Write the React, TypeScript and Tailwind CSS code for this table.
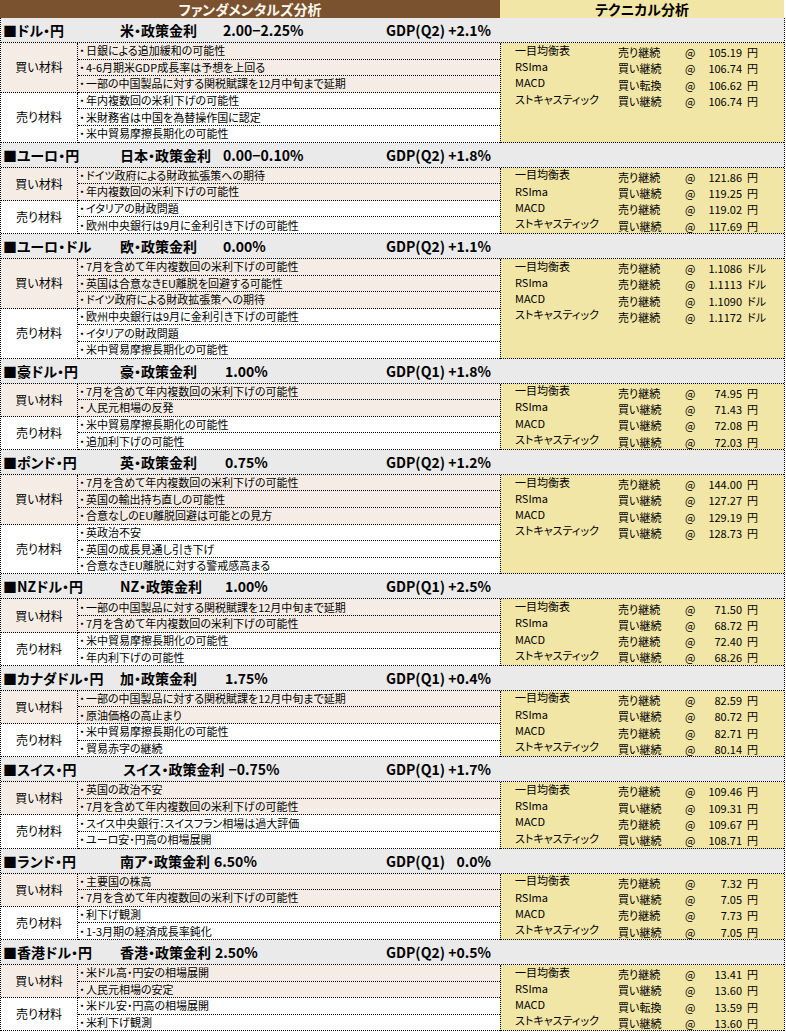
import React from 'react';

type Section = {
  pair: string;
  rateLabel: string;
  rate: string;
  labelCls: string;
  gdp: string;
  gdpValue: string;
  buy: string[];
  sell: string[];
  unit: string;
  tech: [string, string][];
};

const TECH_NAMES = ['一目均衡表', 'RSIma', 'MACD', 'ストキャスティック'];

const sections: Section[] = [
  {
    pair: '■ドル・円', rateLabel: '米・政策金利', rate: '2.00−2.25%', labelCls: 'pl-0 min-w-[99px]',
    gdp: 'GDP(Q2)', gdpValue: '+2.1%',
    buy: ['日銀による追加緩和の可能性', '4-6月期米GDP成長率は予想を上回る', '一部の中国製品に対する関税賦課を12月中旬まで延期'],
    sell: ['年内複数回の米利下げの可能性', '米財務省は中国を為替操作国に認定', '米中貿易摩擦長期化の可能性'],
    unit: '円',
    tech: [['売り継続', '105.19'], ['買い継続', '106.74'], ['買い転換', '106.62'], ['買い継続', '106.74']],
  },
  {
    pair: '■ユーロ・円', rateLabel: '日本・政策金利', rate: '0.00−0.10%', labelCls: 'pl-0 min-w-[99px]',
    gdp: 'GDP(Q2)', gdpValue: '+1.8%',
    buy: ['ドイツ政府による財政拡張策への期待', '年内複数回の米利下げの可能性'],
    sell: ['イタリアの財政問題', '欧州中央銀行は9月に金利引き下げの可能性'],
    unit: '円',
    tech: [['売り継続', '121.86'], ['買い継続', '119.25'], ['売り継続', '119.02'], ['買い継続', '117.69']],
  },
  {
    pair: '■ユーロ・ドル', rateLabel: '欧・政策金利', rate: '0.00%', labelCls: 'pl-0 min-w-[99px]',
    gdp: 'GDP(Q2)', gdpValue: '+1.1%',
    buy: ['7月を含めて年内複数回の米利下げの可能性', '英国は合意なきEU離脱を回避する可能性', 'ドイツ政府による財政拡張策への期待'],
    sell: ['欧州中央銀行は9月に金利引き下げの可能性', 'イタリアの財政問題', '米中貿易摩擦長期化の可能性'],
    unit: 'ドル',
    tech: [['売り継続', '1.1086'], ['売り継続', '1.1113'], ['売り継続', '1.1090'], ['売り継続', '1.1172']],
  },
  {
    pair: '■豪ドル・円', rateLabel: '豪・政策金利', rate: '1.00%', labelCls: 'pl-0 min-w-[101px]',
    gdp: 'GDP(Q1)', gdpValue: '+1.8%',
    buy: ['7月を含めて年内複数回の米利下げの可能性', '人民元相場の反発'],
    sell: ['米中貿易摩擦長期化の可能性', '追加利下げの可能性'],
    unit: '円',
    tech: [['売り継続', '74.95'], ['買い継続', '71.43'], ['買い継続', '72.08'], ['買い継続', '72.03']],
  },
  {
    pair: '■ポンド・円', rateLabel: '英・政策金利', rate: '0.75%', labelCls: 'pl-0 min-w-[101px]',
    gdp: 'GDP(Q2)', gdpValue: '+1.2%',
    buy: ['7月を含めて年内複数回の米利下げの可能性', '英国の輸出持ち直しの可能性', '合意なしのEU離脱回避は可能との見方'],
    sell: ['英政治不安', '英国の成長見通し引き下げ', '合意なきEU離脱に対する警戒感高まる'],
    unit: '円',
    tech: [['売り継続', '144.00'], ['買い継続', '127.27'], ['買い継続', '129.19'], ['買い継続', '128.73']],
  },
  {
    pair: '■NZドル・円', rateLabel: 'NZ・政策金利', rate: '1.00%', labelCls: 'pl-0 min-w-[101px]',
    gdp: 'GDP(Q1)', gdpValue: '+2.5%',
    buy: ['一部の中国製品に対する関税賦課を12月中旬まで延期', '7月を含めて年内複数回の米利下げの可能性'],
    sell: ['米中貿易摩擦長期化の可能性', '年内利下げの可能性'],
    unit: '円',
    tech: [['売り継続', '71.50'], ['買い継続', '68.72'], ['売り継続', '72.40'], ['買い継続', '68.26']],
  },
  {
    pair: '■カナダドル・円', rateLabel: '加・政策金利', rate: '1.75%', labelCls: 'pl-0 min-w-[101px]',
    gdp: 'GDP(Q1)', gdpValue: '+0.4%',
    buy: ['一部の中国製品に対する関税賦課を12月中旬まで延期', '原油価格の高止まり'],
    sell: ['米中貿易摩擦長期化の可能性', '貿易赤字の継続'],
    unit: '円',
    tech: [['売り継続', '82.59'], ['買い継続', '80.72'], ['売り継続', '82.71'], ['買い継続', '80.14']],
  },
  {
    pair: '■スイス・円', rateLabel: 'スイス・政策金利', rate: '−0.75%', labelCls: 'pl-[3px] min-w-[85px]',
    gdp: 'GDP(Q1)', gdpValue: '+1.7%',
    buy: ['英国の政治不安', '7月を含めて年内複数回の米利下げの可能性'],
    sell: ['スイス中央銀行：スイスフラン相場は過大評価', 'ユーロ安・円高の相場展開'],
    unit: '円',
    tech: [['売り継続', '109.46'], ['買い継続', '109.31'], ['売り継続', '109.67'], ['買い継続', '108.71']],
  },
  {
    pair: '■ランド・円', rateLabel: '南ア・政策金利', rate: '6.50%', labelCls: 'pl-0 min-w-[89px]',
    gdp: 'GDP(Q1)', gdpValue: '0.0%',
    buy: ['主要国の株高', '7月を含めて年内複数回の米利下げの可能性'],
    sell: ['利下げ観測', '1-3月期の経済成長率鈍化'],
    unit: '円',
    tech: [['売り継続', '7.32'], ['買い継続', '7.05'], ['売り継続', '7.73'], ['買い継続', '7.05']],
  },
  {
    pair: '■香港ドル・円', rateLabel: '香港・政策金利', rate: '2.50%', labelCls: 'pl-0 min-w-[89px]',
    gdp: 'GDP(Q2)', gdpValue: '+0.5%',
    buy: ['米ドル高・円安の相場展開', '人民元相場の安定'],
    sell: ['米ドル安・円高の相場展開', '米利下げ観測'],
    unit: '円',
    tech: [['売り継続', '13.41'], ['買い継続', '13.60'], ['買い転換', '13.59'], ['買い継続', '13.60']],
  },
];

const ItemRow = ({ text }: { text: string }) => (
  <div className="h-[16.6px] border-b border-dotted border-black flex items-center whitespace-nowrap text-[11px] leading-none">
    <span className="flex w-[8px] justify-center">・</span>
    <span>{text}</span>
  </div>
);

const Group = ({ label, items, buy }: { label: string; items: string[]; buy: boolean }) => (
  <div className={`flex ${buy ? 'bg-[#F5EDE5]' : 'bg-white'}`}>
    <div className="w-[77px] shrink-0 border-r border-b border-dotted border-black flex items-center justify-center text-[12px] leading-none">
      {label}
    </div>
    <div className="flex-1 flex flex-col">
      {items.map((t, i) => (
        <ItemRow key={i} text={t} />
      ))}
    </div>
  </div>
);

const SectionBlock = ({ s }: { s: Section }) => (
  <div>
    <div className="h-[25px] bg-[#EAEAEA] border-b border-dotted border-black flex items-center font-bold text-[14px] leading-none whitespace-nowrap">
      <div className="w-[385px] shrink-0 flex">
        <div className="w-[119px] shrink-0 pl-[2px]">{s.pair}</div>
        <div className={`${s.labelCls} mr-[4px]`}>{s.rateLabel}</div>
        <div>{s.rate}</div>
      </div>
      <div className="w-[58px] shrink-0">{s.gdp}</div>
      <div className="w-[47px] shrink-0 text-right">{s.gdpValue}</div>
    </div>
    <div className="flex">
      <div className="w-[499px] shrink-0 flex flex-col">
        <Group label="買い材料" items={s.buy} buy />
        <Group label="売り材料" items={s.sell} buy={false} />
      </div>
      <div className="flex-1 bg-[#F2E6A6] border-l border-b border-dotted border-black pl-[14px] text-[11px] leading-none">
        {s.tech.map(([signal, price], i) => (
          <div key={i} className="h-[16.3px] flex items-center whitespace-nowrap">
            <div className="w-[103px] shrink-0 pb-[2px]">{TECH_NAMES[i]}</div>
            <div className="w-[67px] shrink-0 pt-[3px]">{signal}</div>
            <div className="w-[14px] shrink-0 pt-[3px]">@</div>
            <div className="w-[43px] shrink-0 pt-[3px] text-right">{price}</div>
            <div className="pl-[5px] pt-[3px]">{s.unit}</div>
          </div>
        ))}
      </div>
    </div>
  </div>
);

export default function App() {
  return (
    <div className="w-[786px] h-[1033px] bg-white text-black font-['Noto_Sans_CJK_JP','Noto_Sans_CJK_SC',sans-serif] [font-feature-settings:'palt'] overflow-hidden">
      <div className="flex h-[18px] w-[784px]">
        <div className="w-[500px] bg-[#7B5230] text-[#FFF8EC] font-bold text-[14px] flex items-center justify-center leading-none">
          ファンダメンタルズ分析
        </div>
        <div className="flex-1 bg-[#F2E6A6] font-bold text-[14px] flex items-center justify-center leading-none">
          テクニカル分析
        </div>
      </div>
      <div className="w-[785px] border-x border-dotted border-black">
        {sections.map((s, i) => (
          <SectionBlock key={i} s={s} />
        ))}
      </div>
    </div>
  );
}
